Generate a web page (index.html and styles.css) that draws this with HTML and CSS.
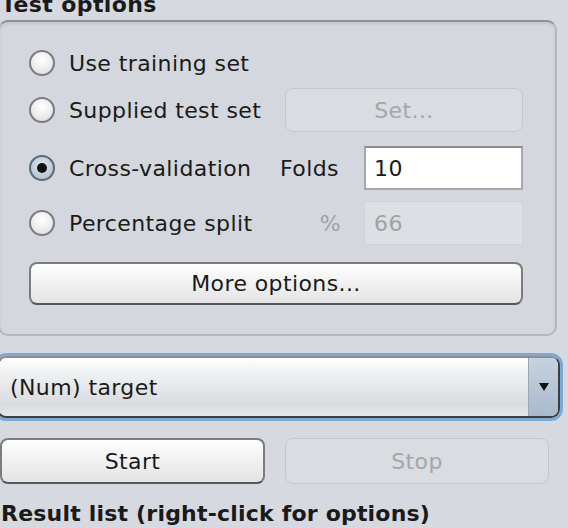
FILE: index.html
```html
<!DOCTYPE html>
<html>
<head>
<meta charset="utf-8">
<link rel="stylesheet" href="styles.css">
</head>
<body>
<div class="page">
  <div class="title">Test options</div>
  <div class="panel">
    <div class="grid">
      <label class="radio-row r1"><span class="radio"></span><span class="lbl">Use training set</span></label>
      <label class="radio-row r2"><span class="radio"></span><span class="lbl">Supplied test set</span></label>
      <div class="btn disabled setbtn">Set...</div>
      <label class="radio-row r3"><span class="radio checked"></span><span class="lbl">Cross-validation</span></label>
      <div class="flabel r3l">Folds</div>
      <div class="field r3f">10</div>
      <label class="radio-row r4"><span class="radio"></span><span class="lbl">Percentage split</span></label>
      <div class="flabel dis r4l">%</div>
      <div class="field dis r4f">66</div>
      <div class="btn more">More options...</div>
    </div>
  </div>
  <div class="combo">
    <div class="combo-inner">
      <span class="combo-text">(Num) target</span>
      <span class="combo-arrow"><svg width="10" height="8" viewBox="0 0 10 8"><path d="M0 0H10L5 8Z" fill="#111"/></svg></span>
    </div>
  </div>
  <div class="actions">
    <div class="btn start">Start</div>
    <div class="btn disabled stop">Stop</div>
  </div>
  <div class="title result">Result list (right-click for options)</div>
</div>
</body>
</html>
```
FILE: styles.css
```css
html, body {
  margin: 0;
  padding: 0;
  background: #d6d9df;
  overflow: hidden;
}
body {
  font-family: "DejaVu Sans", "Liberation Sans", sans-serif;
  font-size: 22px;
  letter-spacing: 0.4px;
  color: #1a1a1a;
  width: 568px;
  height: 528px;
}
.page {
  width: 568px;
}
.title {
  font-weight: bold;
  height: 20px;
  line-height: 20px;
  margin-top: -5px;
  padding-left: 1px;
  margin-bottom: 5px;
  white-space: nowrap;
}
.panel {
  margin-left: -2px;
  width: 559px;
  height: 316px;
  box-sizing: border-box;
  border: 2px solid #b4b7bc;
  border-top-color: #8e9196;
  border-radius: 10px;
  background: #d4d7dd;
  box-shadow: inset 0 2px 3px rgba(0,0,0,0.08);
}
.grid {
  display: grid;
  grid-template-columns: 251px 84px 159px;
  grid-template-rows: 47px 58px 55px 61px 43px;
  padding: 19px 0 0 29px;
}
.grid > * {
  align-self: start;
  height: 44px;
}
.radio-row {
  display: flex;
  align-items: center;
  gap: 14px;
}
.r1 { grid-row: 1; grid-column: 1; }
.r2 { grid-row: 2; grid-column: 1; }
.setbtn { grid-row: 2; grid-column: 2 / 4; margin-left: 5px; }
.r3 { grid-row: 3; grid-column: 1; }
.r3l { grid-row: 3; grid-column: 2; }
.r3f { grid-row: 3; grid-column: 3; }
.r4 { grid-row: 4; grid-column: 1; }
.r4l { grid-row: 4; grid-column: 2; justify-content: flex-end; padding-right: 23px; }
.r4f { grid-row: 4; grid-column: 3; }
.grid > .more { grid-row: 5; grid-column: 1 / 4; height: 43px; }
.radio {
  width: 26px;
  height: 26px;
  box-sizing: border-box;
  border-radius: 50%;
  border: 2px solid #7a7c80;
  background: radial-gradient(circle at 50% 35%, #ffffff 0%, #f0f0f0 45%, #d8d8d8 100%);
  flex: none;
  position: relative;
}
.radio.checked {
  border-color: #5b6a7a;
  background: radial-gradient(circle at 50% 40%, #dfe8f2 0%, #b8c6d6 70%, #9aaabb 100%);
}
.radio.checked::after {
  content: "";
  position: absolute;
  left: 6px;
  top: 6px;
  width: 10px;
  height: 10px;
  border-radius: 50%;
  background: #111;
}
.lbl { white-space: nowrap; }
.flabel {
  display: flex;
  align-items: center;
}
.flabel.dis { color: #a0a2a6; }
.field {
  box-sizing: border-box;
  display: flex;
  align-items: center;
  padding-left: 8px;
  background: #ffffff;
  border: 2px solid #a6a8ac;
  border-top-color: #8a8c90;
}
.field.dis {
  background: #dcdfe4;
  border: 1px solid #cfd2d7;
  color: #a0a2a6;
  padding-left: 9px;
}
.btn {
  box-sizing: border-box;
  display: flex;
  align-items: center;
  justify-content: center;
  border: 2px solid #7a7c80;
  border-bottom-color: #55575b;
  border-radius: 8px;
  background: linear-gradient(#ffffff, #f2f2f2 45%, #e4e4e6 100%);
}
.btn.disabled {
  border: 1px solid #c4c7cc;
  background: #d9dce1;
  color: #a4a6aa;
}
.combo {
  margin-top: 17px;
  margin-left: -6px;
  width: 569px;
  height: 68px;
  box-sizing: border-box;
  border: 3px solid #7ea9d6;
  border-radius: 12px;
}
.combo-inner {
  box-sizing: border-box;
  height: 100%;
  border: 2px solid #3c3e42;
  border-top-color: #8c8e92;
  border-radius: 9px;
  display: flex;
  align-items: center;
  background: linear-gradient(#ffffff, #eeeff1 30%, #d9dbdf 80%, #e6e7ea 100%);
  overflow: hidden;
}
.combo-text {
  flex: 1;
  padding-left: 11px;
}
.combo-arrow {
  width: 29px;
  align-self: stretch;
  display: flex;
  align-items: center;
  justify-content: center;
  border-left: 1px solid #9aa6b4;
  background: linear-gradient(#c6d3e0, #a9bacb);
}
.actions {
  display: flex;
  gap: 20px;
  margin-top: 17px;
}
.start { width: 265px; height: 46px; }
.stop { width: 264px; height: 46px; }
.result {
  margin-top: 15px;
  margin-bottom: 0;
  padding-left: 1px;
  letter-spacing: 0.2px;
  height: 30px;
  line-height: 30px;
}
```
